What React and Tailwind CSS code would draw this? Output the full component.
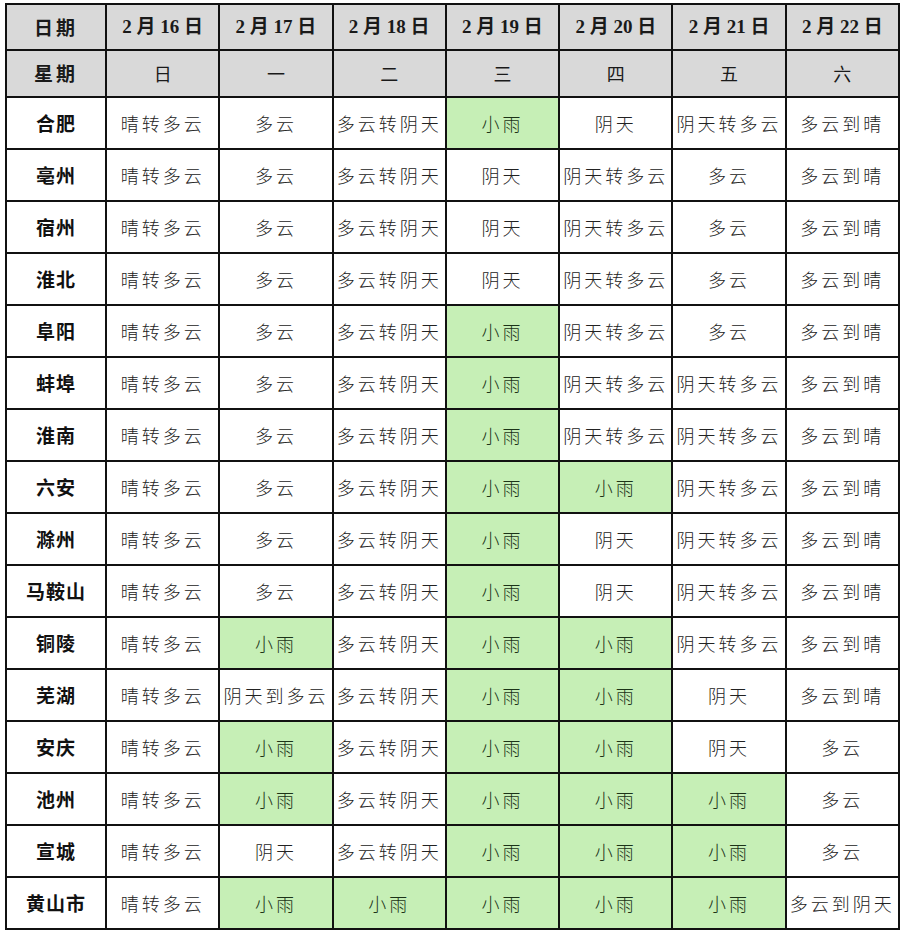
import React from "react";

const G = "g";
const rows = [
  ["合肥", ["晴转多云", "多云", "多云转阴天", ["小雨", G], "阴天", "阴天转多云", "多云到晴"]],
  ["亳州", ["晴转多云", "多云", "多云转阴天", "阴天", "阴天转多云", "多云", "多云到晴"]],
  ["宿州", ["晴转多云", "多云", "多云转阴天", "阴天", "阴天转多云", "多云", "多云到晴"]],
  ["淮北", ["晴转多云", "多云", "多云转阴天", "阴天", "阴天转多云", "多云", "多云到晴"]],
  ["阜阳", ["晴转多云", "多云", "多云转阴天", ["小雨", G], "阴天转多云", "多云", "多云到晴"]],
  ["蚌埠", ["晴转多云", "多云", "多云转阴天", ["小雨", G], "阴天转多云", "阴天转多云", "多云到晴"]],
  ["淮南", ["晴转多云", "多云", "多云转阴天", ["小雨", G], "阴天转多云", "阴天转多云", "多云到晴"]],
  ["六安", ["晴转多云", "多云", "多云转阴天", ["小雨", G], ["小雨", G], "阴天转多云", "多云到晴"]],
  ["滁州", ["晴转多云", "多云", "多云转阴天", ["小雨", G], "阴天", "阴天转多云", "多云到晴"]],
  ["马鞍山", ["晴转多云", "多云", "多云转阴天", ["小雨", G], "阴天", "阴天转多云", "多云到晴"]],
  ["铜陵", ["晴转多云", ["小雨", G], "多云转阴天", ["小雨", G], ["小雨", G], "阴天转多云", "多云到晴"]],
  ["芜湖", ["晴转多云", "阴天到多云", "多云转阴天", ["小雨", G], ["小雨", G], "阴天", "多云到晴"]],
  ["安庆", ["晴转多云", ["小雨", G], "多云转阴天", ["小雨", G], ["小雨", G], "阴天", "多云"]],
  ["池州", ["晴转多云", ["小雨", G], "多云转阴天", ["小雨", G], ["小雨", G], ["小雨", G], "多云"]],
  ["宣城", ["晴转多云", "阴天", "多云转阴天", ["小雨", G], ["小雨", G], ["小雨", G], "多云"]],
  ["黄山市", ["晴转多云", ["小雨", G], ["小雨", G], ["小雨", G], ["小雨", G], ["小雨", G], "多云到阴天"]],
];

const dates = ["16", "17", "18", "19", "20", "21", "22"];
const weekdays = ["日", "一", "二", "三", "四", "五", "六"];

const headFont = { fontFamily: '"Liberation Serif", "Noto Sans CJK SC", serif' };
const bodyFont = { fontFamily: '"Noto Sans CJK SC", sans-serif' };

export default function App() {
  return (
    <div className="w-[903px] h-[936px] bg-[#f3f3f3] flex flex-col">
      <div className="bg-white pl-[5px] pt-[3px] pb-[7px] pr-[3px]">
        <table className="table-fixed border-collapse w-[895px]" style={bodyFont}>
          <colgroup>
            <col className="w-[100px]" />
            <col /><col /><col /><col /><col /><col /><col />
          </colgroup>
          <thead>
            <tr className="h-[46px] bg-[#d9d9d9]">
              <th className="border-2 border-[#111] text-[19px] font-bold text-[#1a1a1a] tracking-[3px]">日期</th>
              {dates.map((d) => (
                <th key={d} className="border-2 border-[#111] text-[19px] font-bold text-[#1a1a1a] whitespace-nowrap" style={headFont}>
                  2 月 {d} 日
                </th>
              ))}
            </tr>
            <tr className="h-[47px] bg-[#d9d9d9]">
              <th className="border-2 border-[#111] text-[19px] font-bold text-[#1a1a1a] tracking-[3px]">星期</th>
              {weekdays.map((w) => (
                <th key={w} className="border-2 border-[#111] text-[18px] font-normal text-[#1a1a1a]">
                  {w}
                </th>
              ))}
            </tr>
          </thead>
          <tbody>
            {rows.map(([city, vals]) => (
              <tr key={city} className="h-[52px]">
                <td className="border-2 border-[#111] text-center text-[19px] font-bold text-[#111] tracking-[1px]">{city}</td>
                {vals.map((v, i) => {
                  const green = Array.isArray(v);
                  const text = green ? v[0] : v;
                  return (
                    <td
                      key={i}
                      className={
                        green
                          ? "border-2 border-[#111] text-center text-[18px] font-light tracking-[3px] text-[#1c3318] bg-[#c6efb6] whitespace-nowrap"
                          : "border-2 border-[#111] text-center text-[18px] font-light tracking-[3px] text-[#222] bg-white whitespace-nowrap"
                      }
                    >
                      {text}
                    </td>
                  );
                })}
              </tr>
            ))}
          </tbody>
        </table>
      </div>
    </div>
  );
}
